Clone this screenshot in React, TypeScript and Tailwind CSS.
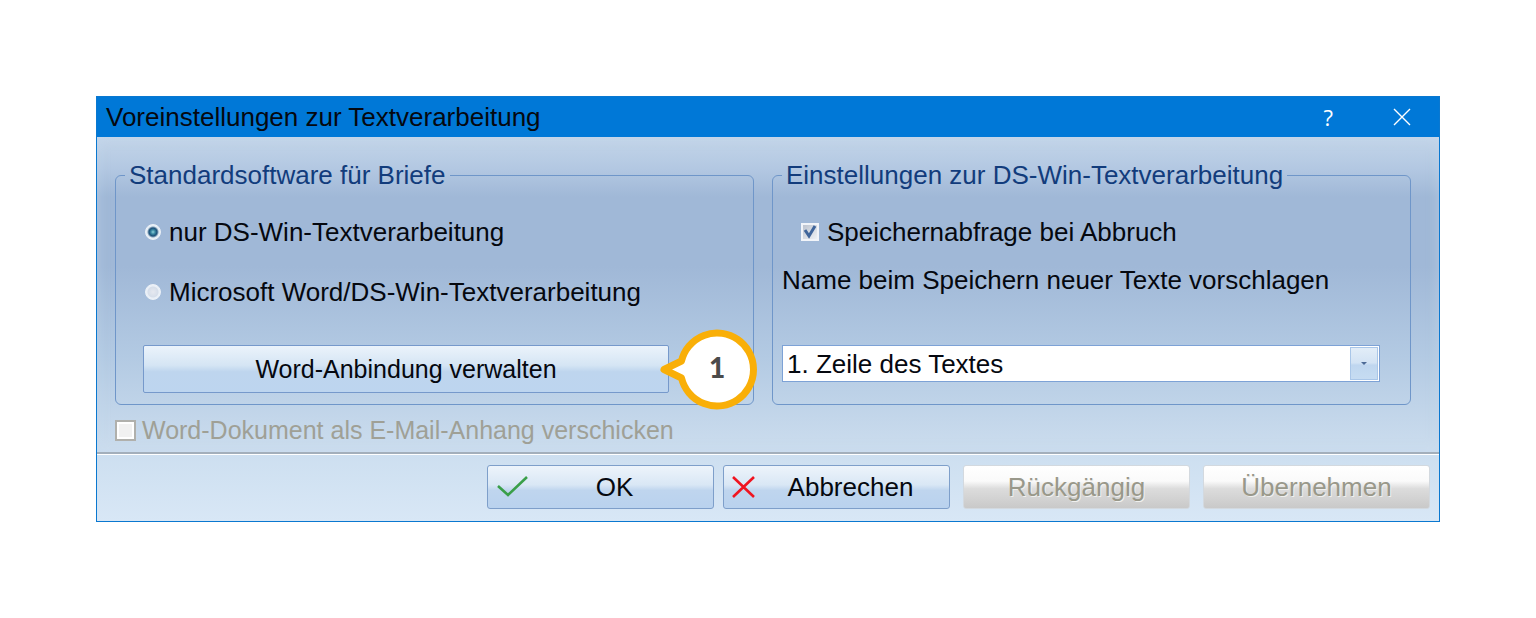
import type { ReactNode } from "react";
import clsx from "clsx";

const Group = ({ title, children }: { title: string, children: ReactNode }) => {
    return <fieldset className="min-w-0 rounded-md border border-[#6f96c9] pl-[9px]">
        <legend className="px-1 leading-[30px] text-[#123c7c]">{title}</legend>
        {children}
    </fieldset>
}

const Radio = ({ id, label, checked }: { id: string, label: string, checked?: boolean }) => {
    return <div className="flex items-center gap-2">
        <input
            id={id}
            type="radio"
            name="software"
            defaultChecked={checked}
            className="size-4 flex-none appearance-none rounded-full border border-[#edf2f8] bg-[radial-gradient(circle,#e6e9f0_0px,#d6deea_5px,#eaf0f7_6px)] checked:bg-[radial-gradient(circle,#8fd0dc_0px,#3c8ba4_2px,#1b4f78_4px,#e6eef6_6px)]"
        />
        <label htmlFor={id}>{label}</label>
    </div>
}

const FooterButton = ({ label, icon, disabled }: { label: string, icon?: ReactNode, disabled?: boolean }) => {
    return <button
        type="button"
        disabled={disabled}
        className={clsx(
            "relative h-11 w-[227px] rounded-[3px] border",
            disabled
                ? "border-[#d3d9df] bg-[linear-gradient(#ffffff_0%,#fafafa_36%,#dcdcdc_54%,#c9c9c9_100%)] text-[#99988a] [text-shadow:1px_1px_0_#f0f0ee]"
                : "border-[#7e9fca] bg-[linear-gradient(#edf4fb_0%,#d9e7f5_45%,#bfd5ee_58%,#b9d2ee_100%)]"
        )}
    >
        {icon}
        <span className={clsx(icon && "pl-7")}>{label}</span>
    </button>
}

const App = () => {
    return <main className="min-h-screen bg-white p-24 font-['Liberation_Sans',Arial,sans-serif] text-[26px] leading-[30px] text-[#05080f]">
        <section className="border border-[#0a78d0]">
            {/* title bar */}
            <header className="flex h-10 items-center justify-between bg-[#0078d7] pl-[9px] pr-7">
                <h1>Voreinstellungen zur Textverarbeitung</h1>
                <div className="flex items-center gap-[60px] text-white">
                    <button type="button" aria-label="Hilfe" className="font-['Open_Sans',sans-serif] text-[22px]">?</button>
                    <button type="button" aria-label="Schließen">
                        <svg className="size-[18px]" viewBox="0 0 18 18" fill="none" stroke="currentColor" strokeWidth="1.4">
                            <path d="M1 1l16 16M17 1L1 17" />
                        </svg>
                    </button>
                </div>
            </header>

            <div className="bg-[linear-gradient(#c3d5e9_0%,#b3c8e2_10%,#a0b8d7_19%,#a0b8d7_41%,#b3cae3_70%,#ccddee_100%)] pb-[7px] pl-[18px] pr-7 pt-[23px] shadow-[inset_0_0_12px_rgba(200,219,240,0.5)]">
                <div className="grid grid-cols-2 gap-[18px]">
                    <Group title="Standardsoftware für Briefe">
                        <div className="flex flex-col gap-[30px] pb-[11px] pl-[18px] pr-[84px] pt-[27px]">
                            <div className="flex flex-col gap-[30px] pl-[2px]">
                                <Radio id="ds-win" label="nur DS-Win-Textverarbeitung" checked />
                                <Radio id="ms-word" label="Microsoft Word/DS-Win-Textverarbeitung" />
                            </div>
                            <div className="relative mt-2">
                                <button type="button" className="h-12 w-full rounded-[2px] border border-[#7699cb] bg-[linear-gradient(#ebf3fb_0%,#d5e5f4_42%,#bed5ee_56%,#bdd5ef_100%)] text-[25px]">
                                    Word-Anbindung verwalten
                                </button>
                                <div className="absolute -right-[88px] -top-4 flex h-20 w-24 items-center justify-center pb-1 pl-4">
                                    <svg className="absolute inset-0 overflow-visible" viewBox="0 0 96 80" fill="#fff" stroke="#f9af08" strokeWidth="7" strokeLinejoin="round">
                                        <path d="M3 40.5L20.5 32A36.5 36.5 0 1 1 20.5 49Z" />
                                    </svg>
                                    <span className="relative font-['Lato',sans-serif] text-[28px] font-black text-[#4b4b4b]">1</span>
                                </div>
                            </div>
                        </div>
                    </Group>

                    <Group title="Einstellungen zur DS-Win-Textverarbeitung">
                        <div className="flex flex-col pr-[30px] pt-[27px]">
                            <div className="flex items-center gap-2 pl-[19px]">
                                <span className="relative flex size-[18px]">
                                    <input
                                        id="save-query"
                                        type="checkbox"
                                        defaultChecked
                                        className="size-full appearance-none border-2 border-[#f1f4f9] bg-[linear-gradient(135deg,#bcc3cf,#eef1f5)]"
                                    />
                                    <svg className="pointer-events-none absolute inset-0" viewBox="0 0 18 18" fill="none" stroke="#3f659b" strokeWidth="3">
                                        <path d="M4 7l4 6 6-10" />
                                    </svg>
                                </span>
                                <label htmlFor="save-query">Speichernabfrage bei Abbruch</label>
                            </div>
                            <label htmlFor="name-suggestion" className="mt-[18px]">Name beim Speichern neuer Texte vorschlagen</label>
                            <div className="relative mt-[50px]">
                                <select
                                    id="name-suggestion"
                                    className="block h-[37px] w-full appearance-none border border-[#7da2d6] bg-white pl-1"
                                >
                                    <option>1. Zeile des Textes</option>
                                </select>
                                <span className="pointer-events-none absolute inset-y-[2px] right-[2px] flex w-7 items-center justify-center border border-[#a9c6e8] bg-[linear-gradient(#e2edf8_0%,#d3e3f4_48%,#bfd6ef_55%,#c6dcf2_100%)]">
                                    <svg className="h-[3px] w-[6px]" viewBox="0 0 6 3" fill="#4c6a96">
                                        <path d="M0 0h6L3 3z" />
                                    </svg>
                                </span>
                            </div>
                        </div>
                    </Group>
                </div>

                <div className="mt-[10px] flex items-center gap-[6px] text-[25px] text-[#9fa096]">
                    <input
                        id="mail-attachment"
                        type="checkbox"
                        disabled
                        className="size-[21px] appearance-none border-2 border-[#b0b0ac] bg-[#f1f1f1] shadow-[inset_0_0_0_2px_#fff]"
                    />
                    <label htmlFor="mail-attachment">Word-Dokument als E-Mail-Anhang verschicken</label>
                </div>
            </div>

            <footer className="border-t-2 border-[#a3afbb] bg-[linear-gradient(#cddff0,#d8e7f6)]">
                <div className="flex justify-end gap-[13px] border-t border-white pb-3 pr-[9px] pt-[10px]">
                    <div className="flex gap-[9px]">
                        <FooterButton
                            label="OK"
                            icon={<svg className="absolute left-2 top-[9px] h-6 w-8" viewBox="0 0 32 24" fill="none" stroke="#3a9f49" strokeWidth="2.6">
                                <path d="M2 11l10 9L31 2" />
                            </svg>}
                        />
                        <FooterButton
                            label="Abbrechen"
                            icon={<svg className="absolute left-2 top-[9px] size-6" viewBox="0 0 24 24" fill="none" stroke="#f01420" strokeWidth="2.6">
                                <path d="M1 2l21 20M22 2L1 22" />
                            </svg>}
                        />
                    </div>
                    <FooterButton label="Rückgängig" disabled />
                    <FooterButton label="Übernehmen" disabled />
                </div>
            </footer>
        </section>
    </main>
}

export default App;
